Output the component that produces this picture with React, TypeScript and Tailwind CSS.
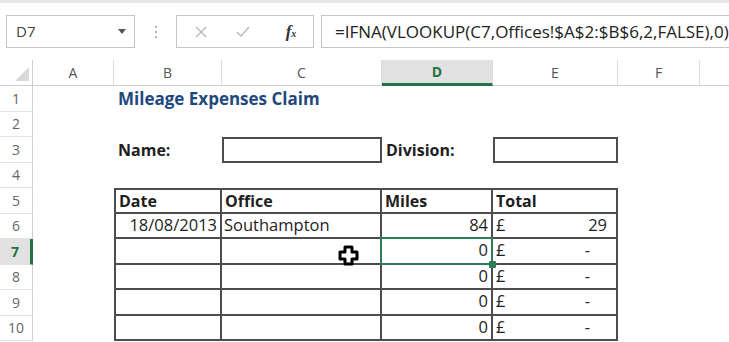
import React from "react";
import clsx from "clsx";

function Cell({ className, children }: { className?: string; children?: React.ReactNode }) {
  return (
    <div className={clsx("relative flex items-center min-w-0 whitespace-nowrap text-[16.5px] text-[#1e1e1e]", className)}>
      {children}
    </div>
  );
}

function ColHead({ label, active, last }: { label: string; active?: boolean; last?: boolean }) {
  return (
    <div
      className={clsx(
        "flex items-center justify-center text-[14px] border-b border-[#cfcfcf]",
        !last && "border-r border-r-[#dcdcdc]",
        active ? "bg-[#e1e1e1] text-[#217346] font-bold border-b-[3px] border-b-[#217346]" : "text-[#555] bg-white"
      )}
    >
      {label}
    </div>
  );
}

function RowHead({ n, active }: { n: number; active?: boolean }) {
  return (
    <div
      className={clsx(
        "flex items-center justify-center text-[14px] border-b border-[#e2e2e2]",
        active
          ? "bg-[#e1e1e1] text-[#217346] font-bold border-r-[3px] border-r-[#217346]"
          : "text-[#666] border-r border-r-[#cfcfcf]"
      )}
    >
      {n}
    </div>
  );
}

const tb = "border-[#4d4d4d]";

export default function App() {
  return (
    <div className="w-[729px] h-[342px] overflow-hidden bg-white font-['Open_Sans',sans-serif] relative">
      {/* Formula bar */}
      <div className="h-[60px] flex items-center border-t-[3px] border-[#e6e6e6]">
        <div className="ml-[6px] w-[129px] h-[33px] border border-[#c6c6c6] flex items-center pl-[9px] pr-[8px]">
          <span className="text-[15px] text-[#444] flex-1">D7</span>
          <svg width="8" height="5" viewBox="0 0 8 5">
            <path d="M0 0 L8 0 L4 5 Z" fill="#555" />
          </svg>
        </div>
        <div className="w-[41px] flex flex-col items-center gap-[3px]">
          <span className="w-[2px] h-[2px] bg-[#b5b5b5]" />
          <span className="w-[2px] h-[2px] bg-[#b5b5b5]" />
          <span className="w-[2px] h-[2px] bg-[#b5b5b5]" />
        </div>
        <div className="w-[138px] h-[33px] border border-[#c6c6c6] flex items-center">
          <div className="w-[48px] flex justify-center">
            <svg width="12" height="12" viewBox="0 0 12 12">
              <path d="M1 1 L11 11 M11 1 L1 11" stroke="#b8b8b8" strokeWidth="1.4" />
            </svg>
          </div>
          <div className="w-[36px] flex justify-center">
            <svg width="14" height="11" viewBox="0 0 14 11">
              <path d="M1 6 L5 10 L13 1" stroke="#b8b8b8" strokeWidth="1.4" fill="none" />
            </svg>
          </div>
          <div className="flex-1 flex justify-center pl-[8px]">
            <span className="font-['Liberation_Serif',serif] italic text-[17px] text-[#333] font-bold">
              f<span className="text-[10px]">x</span>
            </span>
          </div>
        </div>
        <div className="ml-[7px] flex-1 h-[33px] border border-r-0 border-[#c6c6c6] flex items-center pl-[13px] overflow-hidden">
          <span className="text-[17px] text-[#222] whitespace-nowrap">
            =IFNA(VLOOKUP(C7,Offices!$A$2:$B$6,2,FALSE),0)
          </span>
        </div>
      </div>

      {/* Sheet grid */}
      <div className="grid grid-cols-[33px_81px_108px_160px_111px_125px_82px_1fr] grid-rows-[26px_repeat(10,25.5px)]">
        {/* Header row */}
        <div className="flex items-end justify-end pr-[3px] pb-[4px] border-b border-r border-[#cfcfcf]">
          <svg width="14" height="14" viewBox="0 0 14 14">
            <path d="M14 0 L14 14 L0 14 Z" fill="#d9d9d9" />
          </svg>
        </div>
        <ColHead label="A" />
        <ColHead label="B" />
        <ColHead label="C" />
        <ColHead label="D" active />
        <ColHead label="E" />
        <ColHead label="F" />
        <ColHead label="" last />

        {/* Row 1 */}
        <RowHead n={1} />
        <Cell />
        <Cell className="pl-[4px] overflow-visible z-10">
          <span className="font-bold text-[#1f497d] text-[17px]">Mileage Expenses Claim</span>
        </Cell>
        <Cell />
        <Cell />
        <Cell />
        <Cell />
        <Cell />

        {/* Row 2 */}
        <RowHead n={2} />
        <Cell />
        <Cell />
        <Cell />
        <Cell />
        <Cell />
        <Cell />
        <Cell />

        {/* Row 3 */}
        <RowHead n={3} />
        <Cell />
        <Cell className="pl-[4px]">
          <span className="font-bold text-[16px]">Name:</span>
        </Cell>
        <Cell className={clsx("border-2", tb)} />
        <Cell className="pl-[4px]">
          <span className="font-bold text-[16px]">Division:</span>
        </Cell>
        <Cell className={clsx("border-2", tb)} />
        <Cell />
        <Cell />

        {/* Row 4 */}
        <RowHead n={4} />
        <Cell />
        <Cell />
        <Cell />
        <Cell />
        <Cell />
        <Cell />
        <Cell />

        {/* Row 5 header */}
        <RowHead n={5} />
        <Cell />
        <Cell className={clsx("pl-[3px] border-t-2 border-l-2 border-r-2 border-b-2", tb)}>
          <span className="font-bold text-[16px]">Date</span>
        </Cell>
        <Cell className={clsx("pl-[3px] border-t-2 border-r-2 border-b-2", tb)}>
          <span className="font-bold text-[16px]">Office</span>
        </Cell>
        <Cell className={clsx("pl-[3px] border-t-2 border-r-2 border-b-2", tb)}>
          <span className="font-bold text-[16px]">Miles</span>
        </Cell>
        <Cell className={clsx("pl-[3px] border-t-2 border-r-2 border-b-2", tb)}>
          <span className="font-bold text-[16px]">Total</span>
        </Cell>
        <Cell />
        <Cell />

        {/* Row 6 */}
        <RowHead n={6} />
        <Cell />
        <Cell className={clsx("justify-end pr-[3px] border-l-2 border-r-2 border-b-2", tb)}>18/08/2013</Cell>
        <Cell className={clsx("pl-[2px] border-r-2 border-b-2", tb)}>Southampton</Cell>
        <Cell className={clsx("justify-end pr-[3px] border-r-2 border-b-2", tb)}>84</Cell>
        <Cell className={clsx("pl-[3px] pr-[9px] justify-between border-r-2 border-b-2", tb)}>
          <span>£</span>
          <span>29</span>
        </Cell>
        <Cell />
        <Cell />

        {/* Rows 7-10 */}
        {[7, 8, 9, 10].map((n) => (
          <React.Fragment key={n}>
            <RowHead n={n} active={n === 7} />
            <Cell />
            <Cell className={clsx("border-l-2 border-r-2 border-b-2", tb)} />
            <Cell className={clsx("border-r-2 border-b-2", tb)} />
            <Cell className={clsx("justify-end pr-[3px] border-r-2 border-b-2", tb)}>
              <span>0</span>
              {n === 7 && (
                <>
                  <div className="absolute left-[-2px] top-[-2px] right-[-2px] bottom-[-2px] border-2 border-[#2f7d58]" />
                  <div className="absolute right-[-5px] bottom-[-5px] w-[7px] h-[7px] rounded-[1px] bg-[#2f7d58] z-10" />
                </>
              )}
            </Cell>
            <Cell className={clsx("pl-[3px] pr-[26px] justify-between border-r-2 border-b-2", tb)}>
              <span>£</span>
              <span>-</span>
            </Cell>
            <Cell />
            <Cell />
          </React.Fragment>
        ))}
      </div>

      {/* Excel cell cursor */}
      <svg className="absolute left-[338px] top-[245px]" width="21" height="21" viewBox="0 0 21 21">
        <path
          d="M7 2 H14 V7 H19 V14 H14 V19 H7 V14 H2 V7 H7 Z"
          fill="white"
          stroke="black"
          strokeWidth="3"
          strokeLinejoin="round"
        />
      </svg>
    </div>
  );
}
